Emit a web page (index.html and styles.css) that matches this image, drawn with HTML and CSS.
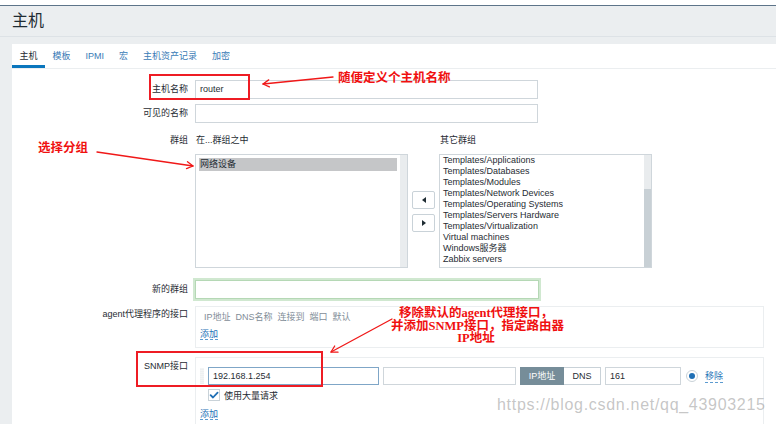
FILE: index.html
```html
<!DOCTYPE html>
<html lang="zh-CN">
<head>
<meta charset="utf-8">
<title>主机</title>
<link rel="stylesheet" href="styles.css">
</head>
<body>
<div class="page">
  <div class="topbar"></div>
  <header class="header"><h1 class="title">主机</h1></header>
  <main class="card">
    <nav class="tabs">
      <span class="tab active">主机</span>
      <span class="tab">模板</span>
      <span class="tab">IPMI</span>
      <span class="tab">宏</span>
      <span class="tab">主机资产记录</span>
      <span class="tab">加密</span>
    </nav>
    <div class="form">
      <div class="row row-name">
        <div class="lbl lbl-input">主机名称</div>
        <div class="input">router</div>
      </div>
      <div class="row row-visible">
        <div class="lbl lbl-input">可见的名称</div>
        <div class="input"></div>
      </div>
      <div class="row row-groups">
        <div class="lbl lbl-line">群组</div>
        <div class="groups">
          <div class="gcol">
            <div class="ghead">在...群组之中</div>
            <div class="listbox">
              <div class="items items-in"><div class="item selected">网络设备</div></div>
              <div class="sbar"></div>
            </div>
          </div>
          <div class="movebtns">
            <div class="mbtn"><span class="tri tri-left"></span></div>
            <div class="mbtn"><span class="tri tri-right"></span></div>
          </div>
          <div class="gcol">
            <div class="ghead">其它群组</div>
            <div class="listbox">
              <div class="items items-out">
                <div class="item">Templates/Applications</div>
                <div class="item">Templates/Databases</div>
                <div class="item">Templates/Modules</div>
                <div class="item">Templates/Network Devices</div>
                <div class="item">Templates/Operating Systems</div>
                <div class="item">Templates/Servers Hardware</div>
                <div class="item">Templates/Virtualization</div>
                <div class="item">Virtual machines</div>
                <div class="item">Windows服务器</div>
                <div class="item">Zabbix servers</div>
              </div>
              <div class="sbar"><div class="thumb"></div></div>
            </div>
          </div>
        </div>
      </div>
      <div class="row row-newgroup">
        <div class="lbl lbl-input">新的群组</div>
        <div class="input glow"></div>
      </div>
      <div class="row row-agent">
        <div class="lbl lbl-box">agent代理程序的接口</div>
        <div class="ifbox agentbox">
          <div class="ifhead"><span>IP地址</span><span>DNS名称</span><span>连接到</span><span>端口</span><span>默认</span></div>
          <div class="addline"><span class="link">添加</span></div>
        </div>
      </div>
      <div class="row row-snmp">
        <div class="lbl lbl-box lbl-snmp">SNMP接口</div>
        <div class="ifbox snmpbox">
          <div class="ifrow">
            <svg class="handle" width="4" height="16" viewBox="0 0 4 16">
              <g fill="#bcc5cb">
                <circle cx="1" cy="1" r="0.6"/><circle cx="3" cy="1" r="0.6"/>
                <circle cx="1" cy="3" r="0.6"/><circle cx="3" cy="3" r="0.6"/>
                <circle cx="1" cy="5" r="0.6"/><circle cx="3" cy="5" r="0.6"/>
                <circle cx="1" cy="7" r="0.6"/><circle cx="3" cy="7" r="0.6"/>
                <circle cx="1" cy="9" r="0.6"/><circle cx="3" cy="9" r="0.6"/>
                <circle cx="1" cy="11" r="0.6"/><circle cx="3" cy="11" r="0.6"/>
                <circle cx="1" cy="13" r="0.6"/><circle cx="3" cy="13" r="0.6"/>
                <circle cx="1" cy="15" r="0.6"/><circle cx="3" cy="15" r="0.6"/>
              </g>
            </svg>
            <div class="inp inp-ip">192.168.1.254</div>
            <div class="inp inp-dns"></div>
            <div class="seg"><span class="seg-on">IP地址</span><span class="seg-off">DNS</span></div>
            <div class="inp inp-port">161</div>
            <span class="radio"><span class="radio-dot"></span></span>
            <span class="link rm-link">移除</span>
          </div>
          <div class="chkrow">
            <span class="chk"><svg width="10" height="10" viewBox="0 0 10 10"><path d="M1.6 5.2 L4 7.5 L8.6 2.6" fill="none" stroke="#1f6fb5" stroke-width="1.8" stroke-linecap="round" stroke-linejoin="round"/></svg></span>
            <span>使用大量请求</span>
          </div>
          <div class="addline snmp-add"><span class="link">添加</span></div>
        </div>
      </div>
    </div>
  </main>

  <div class="wm">https://blog.csdn.net/qq_43903215</div>

  <div class="redbox rb1"></div>
  <div class="redbox rb2"></div>
  <svg class="arrows" width="776" height="424" viewBox="0 0 776 424">
    <g fill="none" stroke="#f01818" stroke-width="1.3" stroke-linecap="round" stroke-linejoin="round">
      <line x1="333" y1="77" x2="263" y2="84"/>
      <polyline points="268.7,79.9 263,84 269.4,86.9"/>
      <line x1="97" y1="152" x2="193" y2="166"/>
      <polyline points="187.5,161.7 193,166 186.5,168.6"/>
      <line x1="392" y1="319" x2="331" y2="352"/>
      <polyline points="338,352.2 331,352 334.7,346"/>
    </g>
  </svg>
  <div class="note note1">随便定义个主机名称</div>
  <div class="note note2">选择分组</div>
  <div class="note note3">移除默认的agent代理接口，<br>并添加SNMP接口，指定路由器<br>IP地址</div>
</div>
</body>
</html>
```
FILE: styles.css
```css
* { box-sizing: border-box; margin: 0; padding: 0; }
html, body { width: 776px; height: 424px; overflow: hidden; }
body {
  background: #ebeef0;
  font-family: "Liberation Sans", "Noto Sans CJK SC", sans-serif;
  font-size: 9px;
  color: #1f2c33;
}
.page {
  position: relative;
  width: 776px;
  height: 424px;
  overflow: hidden;
  display: flex;
  flex-direction: column;
}
.topbar { flex: none; height: 6px; background: #fff; border-bottom: 1px solid #5d7489; }
.header { flex: none; height: 31px; padding-left: 12px; border-bottom: 1px solid #dde2e6; }
.title { font-size: 16px; font-weight: normal; line-height: 30px; color: #1f2c33; }
.card { flex: 1; margin: 7px 0 0 12px; background: #fff; }

.tabs { display: flex; height: 25px; border-bottom: 1px solid #ebeef0; }
.tab {
  height: 24px;
  padding: 3px 7.5px 0;
  line-height: 18px;
  color: #3a7bb6;
  border-bottom: 3px solid transparent;
}
.tab.active { color: #1f2c33; border-bottom-color: #0a76bd; }

.form { padding-top: 11px; }
.row { display: flex; column-gap: 7px; }
.lbl { width: 176px; flex: none; text-align: right; }
.lbl-input { line-height: 19px; }
.lbl-line { line-height: 12px; }
.lbl-box { padding-top: 2px; line-height: 13px; }
.lbl-snmp { padding-top: 3px; }

.input {
  width: 343px;
  height: 19px;
  border: 1px solid #cfd6db;
  padding: 0 4px;
  line-height: 17px;
  background: #fff;
}
.input.glow { width: 344px; border-color: #b5d8b5; box-shadow: 0 0 0 2px #d0e8d0; }

.row-name { margin-bottom: 5px; }
.row-visible { margin-bottom: 11px; }
.row-groups { margin-bottom: 12px; }
.row-newgroup { margin-bottom: 7px; }
.row-agent { margin-bottom: 9px; }

.groups { display: flex; }
.gcol { width: 213px; }
.ghead { height: 12px; line-height: 12px; margin-bottom: 8px; padding-left: 1px; }
.listbox { height: 114px; border: 1px solid #cfd6db; display: flex; }
.items { flex: 1; }
.items-in { padding: 3px; }
.items-in .item { line-height: 13px; padding-left: 1px; }
.item.selected { background: #c5c6c8; }
.items-out { padding: 0 3px; }
.items-out .item { line-height: 11px; white-space: nowrap; }
.sbar { width: 7px; flex: none; background: #e9ecee; display: flex; flex-direction: column; }
.thumb { margin-top: auto; height: 78px; background: #c8d0d5; }

.movebtns {
  width: 23px;
  height: 114px;
  margin: 20px 4px 0;
  display: flex;
  flex-direction: column;
  justify-content: center;
  gap: 5px;
}
.mbtn {
  height: 18px;
  border: 1px solid #c9d2d8;
  border-radius: 2px;
  background: #fff;
  display: flex;
  align-items: center;
  justify-content: center;
}
.tri { width: 0; height: 0; border-top: 3px solid transparent; border-bottom: 3px solid transparent; }
.tri-left { border-right: 4px solid #1f2c33; }
.tri-right { border-left: 4px solid #1f2c33; }

.ifbox { width: 569px; border: 1px solid #ebeef0; padding: 4px; }
.agentbox { height: 42px; }
.ifhead { display: flex; gap: 5px; padding-left: 4px; line-height: 13px; color: #7f8d97; }
.addline { margin-top: 4px; line-height: 13px; }
.link { color: #1e72b6; border-bottom: 1px dashed #5c9bd0; }

.snmpbox { height: 80px; padding: 9px 4px 0; }
.ifrow { display: flex; align-items: center; height: 18px; }
.handle { flex: none; margin-right: 4px; }
.inp { height: 18px; border: 1px solid #cfd6db; padding: 0 4px; line-height: 16px; background: #fff; }
.inp-ip { width: 171px; border-color: #7fa6c7; }
.inp-dns { width: 133px; margin-left: 4px; }
.seg { display: flex; margin-left: 4px; }
.seg span { height: 18px; line-height: 16px; text-align: center; }
.seg-on { width: 44px; background: #768d99; border: 1px solid #768d99; color: #fff; }
.seg-off { width: 37px; border: 1px solid #c9d2d8; border-left: none; background: #fff; }
.inp-port { width: 76px; margin-left: 4px; }
.radio {
  width: 12px;
  height: 12px;
  margin-left: 5px;
  border: 1px solid #c9d2d8;
  border-radius: 50%;
  display: flex;
  align-items: center;
  justify-content: center;
}
.radio-dot { width: 6px; height: 6px; border-radius: 50%; background: #1f6fb5; }
.rm-link { margin-left: 7px; }

.chkrow { display: flex; align-items: center; height: 12px; margin-top: 4px; padding-left: 8px; }
.chk {
  width: 12px;
  height: 12px;
  margin-right: 4px;
  border: 1px solid #c9d2d8;
  display: flex;
  align-items: center;
  justify-content: center;
}
.snmp-add { margin-top: 7px; }

.wm {
  position: absolute;
  top: 396px;
  left: 497px;
  font-family: "Liberation Sans", sans-serif;
  font-size: 16px;
  line-height: 18px;
  letter-spacing: 0.7px;
  color: rgba(150, 150, 150, 0.55);
  white-space: nowrap;
}

.redbox { position: absolute; border: 2px solid #ee1c24; }
.rb1 { left: 149px; top: 74px; width: 101px; height: 26px; }
.rb2 { left: 136px; top: 351px; width: 187px; height: 36px; }
.arrows { position: absolute; left: 0; top: 0; }

.note {
  position: absolute;
  color: #f01010;
  font-family: "Liberation Serif", "Noto Sans CJK SC", serif;
  font-weight: bold;
  font-size: 12.5px;
  line-height: 12.5px;
  white-space: nowrap;
}
.note1 { left: 338px; top: 72px; }
.note2 { left: 38px; top: 142px; }
.note3 { left: 391px; top: 307px; width: 170px; text-align: center; }
```
